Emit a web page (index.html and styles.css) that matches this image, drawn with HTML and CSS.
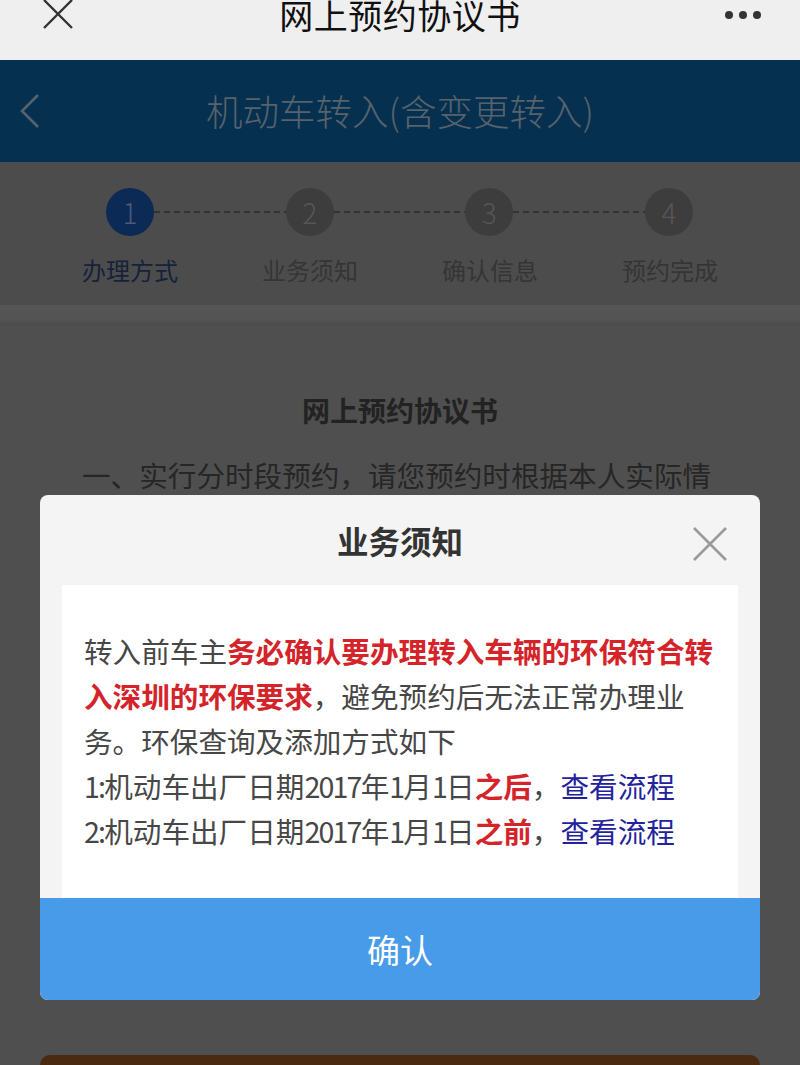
FILE: index.html
```html
<!DOCTYPE html>
<html lang="zh-CN">
<head>
<meta charset="utf-8">
<title>网上预约协议书</title>
<link rel="stylesheet" href="styles.css">
</head>
<body>
<div class="navbar">
  <svg class="nav-close" width="32" height="32" viewBox="0 0 32 32"><path d="M2 1 L30 29 M30 1 L2 29" stroke="#333" stroke-width="2.4" fill="none"/></svg>
  <div class="nav-title">网上预约协议书</div>
  <svg class="nav-more" width="40" height="10" viewBox="0 0 40 10"><circle cx="5" cy="5" r="4" fill="#333"/><circle cx="19" cy="5" r="4" fill="#333"/><circle cx="33" cy="5" r="4" fill="#333"/></svg>
</div>
<div class="header">
  <svg class="back" width="24" height="36" viewBox="0 0 24 36"><path d="M20 2 L4 18 L20 34" stroke="#56626c" stroke-width="2.6" fill="none"/></svg>
  <div class="header-title">机动车转入(含变更转入)</div>
</div>
<div class="steps">
  <div class="step-track">
    <div class="circle active">1</div><div class="dash"></div>
    <div class="circle">2</div><div class="dash"></div>
    <div class="circle">3</div><div class="dash"></div>
    <div class="circle">4</div>
  </div>
  <div class="step-labels">
    <div class="label active">办理方式</div>
    <div class="label">业务须知</div>
    <div class="label">确认信息</div>
    <div class="label">预约完成</div>
  </div>
</div>
<div class="sep"></div>
<div class="content">
  <div class="doc-title">网上预约协议书</div>
  <p class="doc-para">一、实行分时段预约，请您预约时根据本人实际情</p>
  <div class="bottom-btn"></div>
</div>

<div class="modal">
  <div class="modal-head">
    <div class="modal-title">业务须知</div>
    <svg class="modal-close" width="34" height="34" viewBox="0 0 34 34"><path d="M1 1 L33 33 M33 1 L1 33" stroke="#9a9a9a" stroke-width="2.6" fill="none"/></svg>
  </div>
  <div class="modal-body">
    <p class="notice">转入前车主<b class="red">务必确认要办理转入车辆的环保符合转入深圳的环保要求</b>，避免预约后无法正常办理业务。环保查询及添加方式如下<br><span class="num">1:</span>机动车出厂日期<span class="num">2017</span>年<span class="num">1</span>月<span class="num">1</span>日<b class="red">之后</b>，<span class="blue">查看流程</span><br><span class="num">2:</span>机动车出厂日期<span class="num">2017</span>年<span class="num">1</span>月<span class="num">1</span>日<b class="red">之前</b>，<span class="blue">查看流程</span></p>
  </div>
  <div class="modal-btn">确认</div>
</div>
</body>
</html>
```

FILE: styles.css
```css
html, body {
  margin: 0;
  padding: 0;
}
body {
  width: 800px;
  height: 1065px;
  overflow: hidden;
  position: relative;
  background: #4e4e4e;
  font-family: "Noto Sans CJK SC", "Noto Sans", sans-serif;
}
.navbar {
  height: 60px;
  background: #efefef;
  position: relative;
  display: flex;
  justify-content: center;
  align-items: flex-start;
}
.nav-title {
  font-size: 34px;
  line-height: 29px;
  color: #111;
  letter-spacing: 0.5px;
}
.nav-close {
  position: absolute;
  left: 42px;
  top: -1px;
}
.nav-more {
  position: absolute;
  left: 724px;
  top: 10px;
}
.header {
  height: 102px;
  background: #06304f;
  display: flex;
  align-items: center;
  justify-content: center;
  position: relative;
}
.back {
  position: absolute;
  left: 18px;
  top: 33px;
}
.header-title {
  font-size: 36.5px;
  font-weight: 300;
  color: #56626c;
  line-height: 40px;
}
.steps {
  height: 143px;
  background: #4c4c4c;
  box-sizing: border-box;
  padding-top: 26px;
}
.step-track {
  display: flex;
  align-items: center;
  width: 587px;
  margin-left: 106px;
}
.circle {
  width: 48px;
  height: 48px;
  border-radius: 50%;
  background: #3d3d3d;
  color: #565656;
  font-size: 28px;
  font-weight: 300;
  line-height: 48px;
  text-align: center;
  flex: none;
}
.circle.active {
  background: #0b2a55;
  color: #4c5b74;
}
.dash {
  flex: 1;
  height: 2px;
  background: repeating-linear-gradient(to right, #333 0 6px, transparent 6px 10px);
}
.step-labels {
  display: grid;
  grid-template-columns: repeat(4, 180px);
  padding: 0 40px;
  margin-top: 19px;
}
.label {
  text-align: center;
  font-size: 24px;
  line-height: 30px;
  color: #353535;
}
.label.active {
  color: #15223a;
}
.sep {
  height: 20px;
  background: linear-gradient(#555555, #545454 70%, #4b4b4b);
}
.content {
  background: #4f4f4f;
  padding-top: 65px;
}
.doc-title {
  text-align: center;
  font-size: 28px;
  line-height: 40px;
  font-weight: bold;
  color: #222;
}
.doc-para {
  margin: 22px 0 0 82px;
  font-size: 28.6px;
  line-height: 46px;
  color: #262626;
}
.bottom-btn {
  margin: 557px 40px 0;
  height: 60px;
  border-radius: 10px;
  background: #4a2a10;
}
.modal {
  position: absolute;
  left: 40px;
  top: 495px;
  width: 720px;
  border-radius: 8px;
  overflow: hidden;
  background: #f4f4f4;
}
.modal-head {
  height: 90px;
  display: flex;
  justify-content: center;
  align-items: center;
  position: relative;
}
.modal-title {
  font-size: 31.5px;
  font-weight: bold;
  color: #333;
  line-height: 40px;
}
.modal-close {
  position: absolute;
  right: 33px;
  top: 32px;
}
.modal-body {
  margin: 0 22px;
  background: #fff;
  padding: 43px 18px 45px 22px;
}
.notice {
  margin: 0;
  font-size: 28.6px;
  line-height: 45px;
  color: #474747;
}
.num {
  letter-spacing: -1.8px;
}
.red {
  color: #d4242a;
  font-weight: bold;
}
.blue {
  color: #22229e;
}
.modal-btn {
  height: 102px;
  background: #479be8;
  color: #fff;
  font-size: 33px;
  display: flex;
  align-items: center;
  justify-content: center;
}
```
